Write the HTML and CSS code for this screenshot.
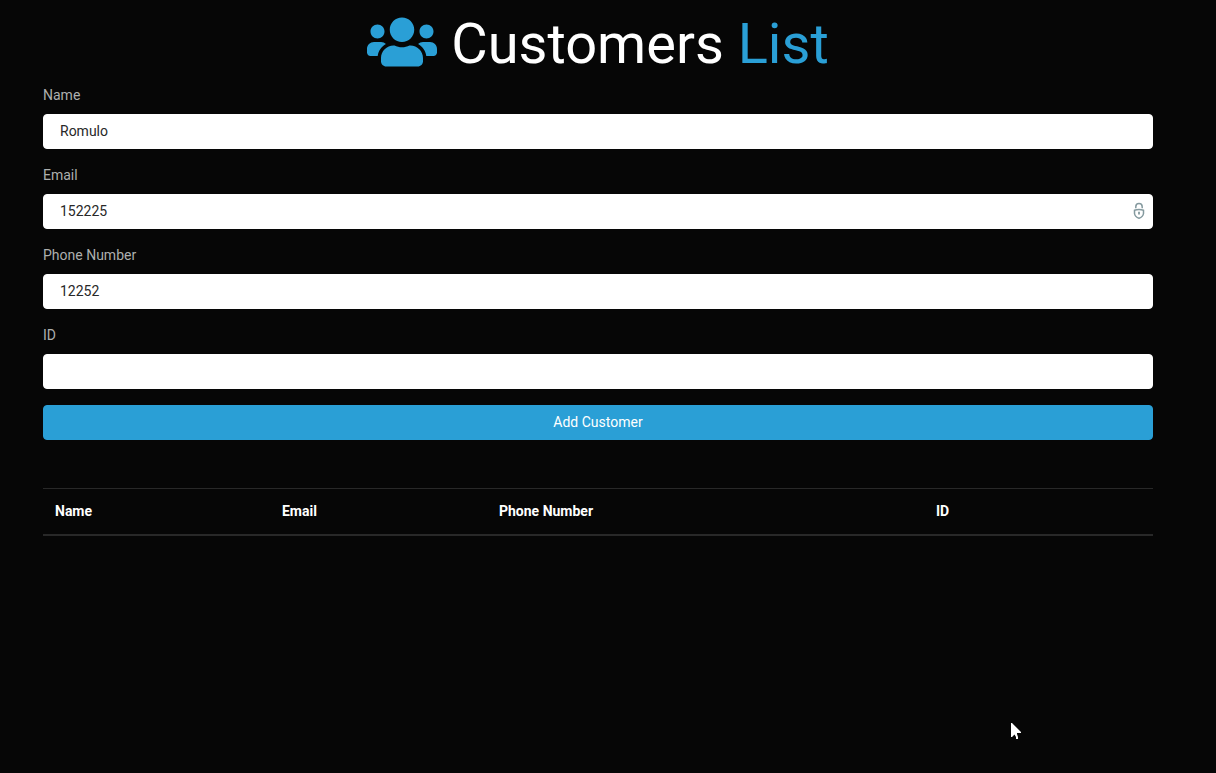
FILE: index.html
```html
<!DOCTYPE html>
<html lang="en">
<head>
<meta charset="utf-8">
<meta name="viewport" content="width=device-width, initial-scale=1">
<title>Customers List</title>
<link rel="stylesheet" href="styles.css">
</head>
<body>
<main class="container">
  <h1 class="title">
    <svg class="title-icon" viewBox="0 0 640 512" aria-hidden="true"><path fill="currentColor" d="M96 224c35.300 0 64-28.700 64-64s-28.700-64-64-64-64 28.700-64 64 28.700 64 64 64zm448 0c35.300 0 64-28.700 64-64s-28.700-64-64-64-64 28.700-64 64 28.700 64 64 64zm32 32h-64c-17.600 0-33.500 7.100-45.100 18.600 40.300 22.100 68.900 62 75.100 109.400h66c17.700 0 32-14.300 32-32v-32c0-35.300-28.700-64-64-64zm-256 0c61.900 0 112-50.100 112-112S381.900 32 320 32 208 82.100 208 144s50.100 112 112 112zm76.800 32h-8.300c-20.800 10-43.900 16-68.500 16s-47.600-6-68.500-16h-8.300C179.600 288 128 339.600 128 403.200V432c0 26.500 21.500 48 48 48h288c26.500 0 48-21.500 48-48v-28.800c0-63.600-51.600-115.200-115.200-115.200zm-223.700-13.400C161.500 263.100 145.600 256 128 256H64c-35.300 0-64 28.700-64 64v32c0 17.700 14.300 32 32 32h65.900c6.300-47.400 34.900-87.300 75.200-109.400z"/></svg>
    Customers <span class="accent">List</span>
  </h1>
  <form class="form">
    <div class="field">
      <label for="name">Name</label>
      <input class="input" id="name" type="text" value="Romulo">
    </div>
    <div class="field">
      <label for="email">Email</label>
      <div class="input-wrap">
        <input class="input" id="email" type="text" value="152225">
        <svg class="lock" viewBox="0 0 12 18" fill="none" stroke="currentColor" aria-hidden="true"><path stroke-width="1.500" d="M2.800 6.200V4.800a3.200 3.200 0 0 1 6.400 0V6.200"/><path stroke-width="1.500" d="M1.500 8.200Q6 6.700 10.500 8.200V11.500Q10 15 6 16.300Q2 15 1.500 11.500Z"/><path stroke-width="1.800" d="M6 9.800V12.500"/></svg>
      </div>
    </div>
    <div class="field">
      <label for="phone">Phone Number</label>
      <input class="input" id="phone" type="text" value="12252">
    </div>
    <div class="field">
      <label for="customer-id">ID</label>
      <input class="input" id="customer-id" type="text">
    </div>
    <button class="button" type="button">Add Customer</button>
  </form>
  <table class="table">
    <colgroup><col class="col-name"><col class="col-email"><col class="col-phone"><col class="col-id"></colgroup>
    <thead>
      <tr><th scope="col">Name</th><th scope="col">Email</th><th scope="col">Phone Number</th><th scope="col">ID</th></tr>
    </thead>
    <tbody></tbody>
  </table>
</main>
<svg class="pointer" viewBox="0 0 12 19" aria-hidden="true"><path fill="#fff" d="M1 1V15H2L4.500 12.500L6 15V17H8V15L7 12V11H11V10L2 1Z"/></svg>
</body>
</html>
```
FILE: styles.css
```css
*,
*::before,
*::after {
  box-sizing: border-box;
}

body {
  margin: 0;
  padding-right: 20px;
  background: #060606;
  color: #adafae;
  font-family: Roboto, "Helvetica Neue", Arial, sans-serif;
  font-size: 14px;
  line-height: 21px;
}

.container {
  max-width: 1140px;
  margin: 0 auto;
  padding: 11px 15px;
}

.title {
  margin: 0 0 7px;
  color: #fff;
  font-size: 56px;
  font-weight: 400;
  line-height: 67px;
  text-align: center;
}

.title-icon {
  width: 70px;
  height: 56px;
  color: #2a9fd6;
  vertical-align: -7px;
}

.accent {
  color: #2a9fd6;
}

.field {
  margin-bottom: 16px;
}

.field label {
  display: block;
  width: fit-content;
  margin-bottom: 8px;
}

.input-wrap {
  position: relative;
}

.input,
.button {
  display: block;
  width: 100%;
  height: 35px;
  border: 1px solid #fff;
  border-radius: 4px;
  font: inherit;
}

.input {
  padding: 5px 16px 7px;
  background: #fff;
  color: #282828;
}

.lock {
  position: absolute;
  top: 8px;
  right: 8px;
  width: 12px;
  height: 18px;
  color: #84999e;
}

.button {
  border-color: #2a9fd6;
  background: #2a9fd6;
  color: #fff;
  cursor: pointer;
}

.table {
  width: 100%;
  margin-top: 48px;
  border-collapse: separate;
  border-spacing: 0;
  table-layout: fixed;
  color: #fff;
}

.table th {
  padding: 12px;
  border-top: 1px solid #282828;
  border-bottom: 2px solid #282828;
  font-weight: 700;
  text-align: left;
}

.col-name {
  width: 20.45%;
}

.col-email {
  width: 19.55%;
}

.col-phone {
  width: 39.37%;
}

.pointer {
  position: absolute;
  top: 722px;
  left: 1010px;
  width: 12px;
  height: 19px;
}
```
